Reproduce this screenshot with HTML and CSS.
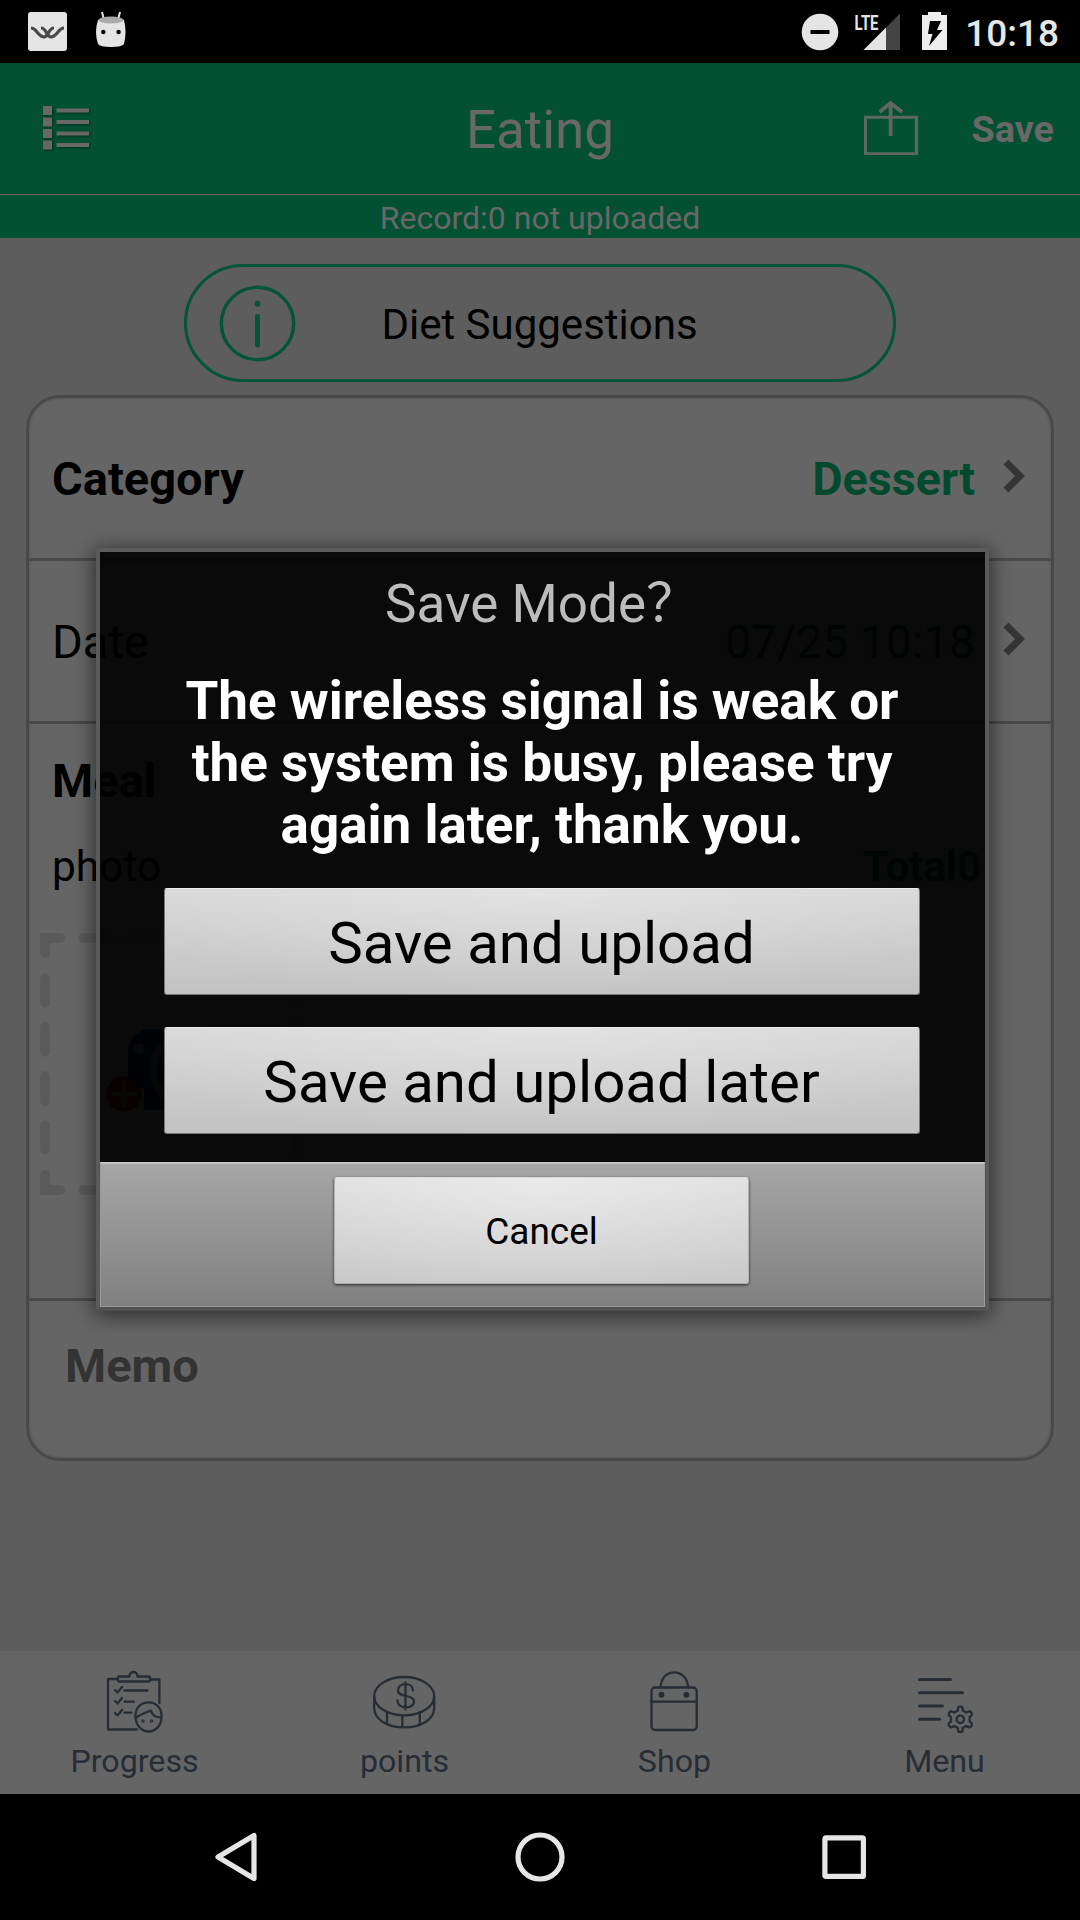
FILE: index.html
```html
<!DOCTYPE html>
<html lang="en">
<head>
<meta charset="utf-8">
<title>Eating</title>
<link rel="stylesheet" href="styles.css">
</head>
<body>
<div class="screen">
  <div class="status">
    <svg class="status-w" width="39" height="39" viewBox="0 0 39 39"><rect width="39" height="39" rx="3" fill="#e4e4e4"/><path d="M3 16q3 0 6 4q4 5 7 5c5 0 4-9 10-9M13 16c6 0 5 9 10 9q3 0 7-5q3-4 6-4" fill="none" stroke="#484848" stroke-width="3.200"/></svg>
    <svg class="status-droid" width="32" height="38" viewBox="0 0 32 38"><path d="M7 1l2 8M25 1l-2 8" stroke="#e4e4e4" stroke-width="2"/><path d="M3 9q13-6 26 0q3 12 0 24q-2 3-13 3T3 33Q-1 21 3 9z" fill="#e4e4e4"/><ellipse cx="16" cy="9" rx="12.3" ry="3.6" fill="#aaa"/><circle cx="8.3" cy="21" r="2.2"/><circle cx="23.6" cy="21" r="2.2"/></svg>
    <div class="status-right">
      <svg width="38" height="38" viewBox="0 0 38 38"><circle cx="19" cy="19" r="18.3" fill="#e4e4e4"/><path d="M9.500 19h19" stroke="#000" stroke-width="4"/></svg>
      <svg class="signal" width="50" height="42" viewBox="-3 -4 50 42"><path d="M32 14.500L46 0.500V37H32z" fill="#444"/><path d="M9.500 37L32 14.500V37z" fill="#e4e4e4"/><text class="lte" x="0.500" y="16.500" textLength="24" lengthAdjust="spacingAndGlyphs">LTE</text></svg>
      <svg class="battery" width="25" height="38" viewBox="0 0 25 38"><path d="M0 3h6V0h13v3h6v35H0z" fill="#eee"/><path d="M8 9h11l-4 9h5.500L7 34l3.500-12H6z" fill="#000"/></svg>
      <span class="clock">10:18</span>
    </div>
  </div>

  <header class="header">
    <svg class="list-icon" width="47" height="46" viewBox="0 0 47 46" fill="#686868"><path d="M0 0h9v9H0zM0 11.500h9v9H0zM0 23h9v9H0zM0 34.500h9v9H0zM13.500 2.500H46v4H13.500zM13.500 14H46v4H13.500zM13.500 25.500H46v4H13.500zM13.500 37H46v4H13.500z"/></svg>
    <h1 class="title">Eating</h1>
    <div class="header-actions">
      <svg width="54" height="54" viewBox="0 0 54 54" fill="none" stroke="#5f6762" stroke-width="3"><path d="M1.500 16.200h51v36.500h-51z"/><path d="M26.600 35V2.500M15.500 11L26.600 2L38 11" stroke-width="3.800"/></svg>
      <span class="save">Save</span>
    </div>
  </header>
  <div class="record">Record:0 not uploaded</div>

  <main class="content">
    <div class="pill">
      <svg class="info" width="78" height="78" viewBox="0 0 78 78" fill="none" stroke="#035438"><circle cx="38.500" cy="38.500" r="36.200" stroke-width="3.400"/><circle cx="38.500" cy="18.700" r="3" fill="#035438" stroke="none"/><path d="M38.500 31.500V60" stroke-width="5" stroke-linecap="round"/></svg>
      <span>Diet Suggestions</span>
    </div>

    <section class="card">
      <div class="row">
        <b>Category</b>
        <b class="value dessert">Dessert</b>
        <svg width="22" height="34" viewBox="0 0 22 34"><path d="M3 3l14 14L3 31" fill="none" stroke="#353535" stroke-width="7"/></svg>
      </div>
      <div class="row">
        <span>Date</span>
        <span class="value date">07/25 10:18</span>
        <svg width="22" height="34" viewBox="0 0 22 34"><path d="M3 3l14 14L3 31" fill="none" stroke="#353535" stroke-width="7"/></svg>
      </div>
      <div class="meal">
        <b class="meal-title">Meal</b>
        <div class="photo-line"><span>photo</span><b>Total0</b></div>
        <svg class="dropzone" width="262" height="262" viewBox="0 0 262 262">
          <path d="M5 20V5H20M5 242V257H20M242 5H257V20M257 242V257H242" fill="none" stroke="#5a5a5a" stroke-width="10" stroke-linecap="round"/>
          <g stroke="#5a5a5a" stroke-width="9.500" stroke-linecap="round"><path d="M5 45V220M257 45V220" stroke-dasharray="25 24"/><path d="M43 5H220M43 257H220" stroke-dasharray="25 24"/></g>
          <path d="M88 115q2-10 10-14l5-5h18l5 7h18l8-3h40l8 3h14v74H104v-20l-16-14z" fill="#001f3a"/>
          <circle cx="99" cy="116" r="5.500" fill="#555"/>
          <circle cx="148" cy="137" r="35" fill="none" stroke="#444" stroke-width="7"/>
          <circle cx="84" cy="161" r="17.500" fill="#4a0b00"/>
          <path d="M84 148v26M71 161h26" stroke="#4a4a4a" stroke-width="4"/>
        </svg>
      </div>
      <div class="memo">Memo</div>
    </section>
  </main>

  <nav class="tabs">
    <div class="tab">
      <svg class="line-icon" width="64" height="64" viewBox="0 0 64 64">
        <path d="M15 9H5V59.500H34M47 9.500H56.400V33"/><path d="M16 6.500H26.500C26.500 0.500 34.500 0.500 34.500 6.500H46Q47 6.500 47 7.500V10.500Q47 11.500 46 11.500H16Q15 11.500 15 10.500V7.500Q15 6.500 16 6.500z"/>
        <path d="M12 20l2.500 2.500L19 17M12 31l2.500 2.500L19 28M12 43l2.500 2.500L19 40M21.500 20.500H44.500M21.500 31.600H31M21.500 42.600H28.500"/>
        <path d="M32.500 47C31.500 27.500 59.500 27.500 58.500 47C58.500 56 52 61.500 45.500 61.500S33 56 32.500 47zM33 47.500Q40 43 47.800 40.600Q50.500 48 58.500 47.300"/>
        <circle cx="39.900" cy="51" r=".6"/><circle cx="48.500" cy="51" r=".6"/>
      </svg>
      <span>Progress</span>
    </div>
    <div class="tab">
      <svg class="line-icon" width="64" height="64" viewBox="0 0 64 64">
        <ellipse cx="31.200" cy="26.200" rx="30" ry="19.200"/><path d="M1.200 27V38C1.200 50 15 57.300 31.200 57.300S61.200 50 61.200 38V27M14 42V53M29.300 45.500V57M46.800 42.500V54"/>
        <path d="M40 20.500C40 12 25 12 25 20.500C25 28 41 24 41 31.500C41 39.500 24.500 39.500 24.500 30.500M32.500 12.500V39.500"/>
      </svg>
      <span>points</span>
    </div>
    <div class="tab">
      <svg class="line-icon" width="64" height="64" viewBox="0 0 64 64">
        <rect x="8.500" y="17.500" width="45.200" height="42.500" rx="3.500"/><path d="M8.500 31.600H53.700M17.500 17C19 -2.500 43.500 -2.500 45.200 17"/><circle cx="18.500" cy="24.700" r="1.800" fill="#272d35"/><circle cx="43.400" cy="24.700" r="1.800" fill="#272d35"/>
      </svg>
      <span>Shop</span>
    </div>
    <div class="tab">
      <svg class="line-icon" width="64" height="64" viewBox="0 0 64 64">
        <path d="M6.500 9.400H37.500M6.500 22.700H49.500M6.500 36H29.500M6.500 49.300H26.500" stroke-width="3"/>
        <path d="M44.800 40.500L45.300 37Q47.300 36.200 49.300 37L49.800 40.500L53.200 42.500L56.500 41.200Q58.800 42 59 45L56.600 47.200V51.400L59 53.600Q58.800 56.500 56.500 57.400L53.200 56.100L49.800 58.100L49.300 61.600Q47.300 62.400 45.300 61.600L44.800 58.100L41.400 56.100L38.100 57.400Q35.800 56.500 35.600 53.600L38 51.400V47.200L35.600 45Q35.800 42 38.100 41.200L41.400 42.500z"/><circle cx="47.300" cy="49.300" r="3.700"/>
      </svg>
      <span>Menu</span>
    </div>
  </nav>

  <div class="sysnav">
    <svg width="52" height="52" viewBox="0 0 52 52"><path d="M8 26L44 4.500V47.500z"/></svg>
    <svg width="52" height="52" viewBox="0 0 52 52"><circle cx="26" cy="26" r="22"/></svg>
    <svg width="52" height="52" viewBox="0 0 52 52"><rect x="6.900" y="6.900" width="38.500" height="38.500" rx="1"/></svg>
  </div>

  <div class="dialog" role="dialog">
    <div class="dialog-body">
      <h2 class="dialog-title">Save Mode？</h2>
      <p class="message">The wireless signal is weak or<br>the system is busy, please try<br>again later, thank you.</p>
      <button class="btn">Save and upload</button>
      <button class="btn">Save and upload later</button>
    </div>
    <div class="dialog-footer"><button class="btn cancel">Cancel</button></div>
  </div>
</div>
</body>
</html>
```
FILE: styles.css
```css
* { box-sizing: border-box; }
body { margin: 0; font-family: Roboto, "Noto Sans CJK SC", sans-serif; background: #000; }
svg { display: block; flex: none; }
h1, h2, p { margin: 0; font-weight: 400; }

.screen { position: relative; display: flex; flex-direction: column; width: 1080px; height: 1920px; overflow: hidden; background: #5d5d5d; }

.status { display: flex; height: 63px; background: #000; padding: 0 21px 0 28px; }
.status-w { margin-top: 12px; }
.status-droid { margin: 11px 0 0 28px; }
.status-right { display: flex; margin-left: auto; padding-top: 13px; }
.signal { margin: -4px 0 0 12px; overflow: visible; }
.lte { font-size: 21px; font-weight: 700; fill: #e4e4e4; }
.battery { margin: -1px 18px 0 21px; }
.clock { font-size: 37px; font-weight: 500; line-height: 42px; color: #e6e6e6; }

.header { display: grid; grid-template-columns: 1fr auto 1fr; align-items: center; height: 131px; padding: 0 26px 0 43px; background: #035033; color: #686868; }
.list-icon { margin-top: 1px; filter: drop-shadow(1px 1px 1px rgba(0, 0, 0, .4)); }
.title { font-size: 53px; line-height: 64px; padding-top: 2px; margin-left: -17px; }
.header-actions { display: flex; align-items: center; justify-content: flex-end; gap: 53px; }
.save { font-size: 37.800px; font-weight: 700; line-height: 46px; padding-top: 1px; }
.header-actions svg { margin-top: -1px; }
.record { height: 44px; border-top: 1px solid #5e655f; background: #035033; color: #686868; font-size: 32px; line-height: 46px; text-align: center; }

.content { flex: 1; padding: 26px 26px 0; }
.pill { display: flex; align-items: center; justify-content: center; position: relative; width: 712px; height: 118px; margin: 0 auto; border: 3px solid #035438; border-radius: 59px; font-size: 42px; padding: 3px 1px 0 0; }
.info { position: absolute; left: 32px; top: 18px; }

.card { margin-top: 13px; height: 1066px; border: 3px solid #494949; border-radius: 34px; background: #656565; color: #000; font-size: 47px; box-shadow: inset 0 0 3px rgba(0, 0, 0, .25); }
.row { display: flex; align-items: center; height: 163px; padding: 0 26px 0 23px; border-bottom: 3px solid #494949; }
.row > svg { margin-top: -4px; }
.row .value { margin: 0 28px 0 auto; padding-top: 2px; color: #023624; font-size: 46.500px; }
.row .date { font-size: 46.300px; }
.row .dessert { color: #024a2e; font-size: 46.700px; }
.meal { height: 577px; padding: 29px 70px 0 23px; border-bottom: 3px solid #494949; }
.meal-title { display: block; line-height: 56px; }
.photo-line { display: flex; justify-content: space-between; margin-top: 32px; font-size: 42.500px; line-height: 52px; }
.photo-line b { color: #023624; font-size: 42px; }
.dropzone { margin: 40px 0 0 -12px; }
.memo { padding: 37px 0 0 36px; font-weight: 700; line-height: 56px; color: #333; }

.tabs { display: grid; grid-template-columns: repeat(4, 1fr); height: 143px; background: #656565; }
.tab { display: flex; flex-direction: column; align-items: center; gap: 7px; padding: 19px 1px 0 0; color: #272d35; font-size: 32.200px; line-height: 40px; }
.line-icon { fill: none; stroke: #272d35; stroke-width: 2.300; stroke-linecap: round; stroke-linejoin: round; }

.sysnav { display: grid; grid-template-columns: repeat(3, 1fr); place-items: center; height: 126px; padding: 0 84px; background: #000; }
.sysnav svg { fill: none; stroke: #e6e6e6; stroke-width: 5.200; stroke-linejoin: round; }

.dialog { position: absolute; left: 96px; top: 548px; width: 893px; height: 763px; display: flex; flex-direction: column; border: 4px solid; border-color: #5c5c5c #5a5a5a #515151; border-radius: 4px; box-shadow: 0 3px 20px 2px rgba(0, 0, 0, .55); }
.dialog-body { display: flex; flex-direction: column; height: 610px; padding: 20px 65px 0 64px; background: rgba(0, 0, 0, .9); }
.dialog-title { font-size: 53px; line-height: 64px; text-align: center; color: #bcbcbc; }
.message { margin: 34px 0 32px; color: #fff; font-size: 53px; font-weight: 700; line-height: 62px; text-align: center; white-space: nowrap; }
.btn { height: 107px; flex: none; margin: 0 0 32px; padding: 2px 1px 0 0; border: 1px solid #777; border-top-color: #eee; border-radius: 3px; background: radial-gradient(ellipse 60% 110% at 50% 0, rgba(255, 255, 255, .28), rgba(255, 255, 255, 0)), linear-gradient(#d8d8d8, #c2c2c2); font-family: inherit; font-size: 58.200px; color: #000; }
.dialog-footer { display: flex; justify-content: center; flex: 1; padding: 13px 2px 0 0; border: 1px solid #999; border-top: 2px solid #c4c4c4; background: linear-gradient(#a6a6a6, #808080); }
.cancel { width: 415px; margin: 0; padding: 1px 0 0; border-color: #ddd #b0b0b0 #aaa; background: radial-gradient(ellipse 70% 120% at 50% 0, rgba(255, 255, 255, .35), rgba(255, 255, 255, 0)), linear-gradient(#dfdfdf, #c9c9c9); box-shadow: 0 1px 3px rgba(0, 0, 0, .7); font-size: 37px; }
```
